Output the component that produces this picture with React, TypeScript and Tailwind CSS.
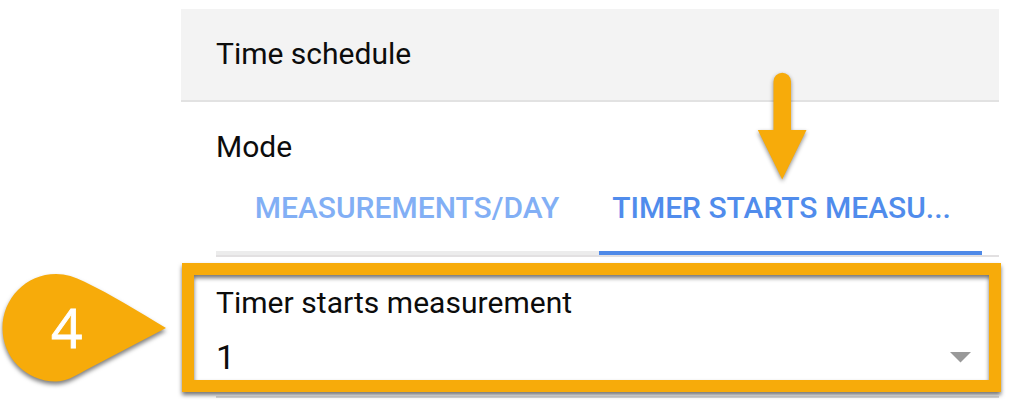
function Callout() {
  return (
    <div className="absolute left-0 top-[264px] h-[130px] w-[175px]">
      <svg
        className="absolute inset-0 drop-shadow-[0_3px_2px_rgba(0,0,0,0.5)]"
        width="175"
        height="130"
        viewBox="0 0 175 130"
        aria-hidden="true"
      >
        <path
          d="M166 64 L84 107 C75 112 66 117.500 56 117.500 C26 117.500 2.500 93.500 2.500 64 C2.500 34.500 26 10 56 10 C66 10 75 13 84 17.500 C112 31 138 47 166 64 Z"
          fill="#f7ab0a"
        />
      </svg>
      <span className="absolute left-[51px] top-[23px] font-['Open_Sans',sans-serif] text-[55px] font-medium leading-[80px] text-white [-webkit-text-stroke:0.8px_white]">
        4
      </span>
    </div>
  );
}

function Arrow() {
  return (
    <svg
      className="absolute left-[750px] top-[65px] drop-shadow-[0_2px_2px_rgba(0,0,0,0.45)]"
      width="64"
      height="124"
      viewBox="0 0 64 124"
      aria-hidden="true"
    >
      <path d="M23.500 16.500 a8.750 8.750 0 0 1 17.500 0 V65 H56.500 L32.200 114.500 L7.800 65 H23.500 Z" fill="#f7ab0a" />
    </svg>
  );
}

export default function App() {
  return (
    <div className="relative h-[407px] w-[1024px] overflow-hidden bg-white pl-[181px] pt-[9px] font-[Roboto,sans-serif] text-[30px] leading-10 text-[#0c0c0c]">
      <main className="flex w-[818px] flex-col">
        <header className="h-[93px] border-b-2 border-[#e2e2e2] bg-[#f3f3f3] pl-[35px] pt-[25px]">
          <h1>Time schedule</h1>
        </header>

        <section className="ml-[35px] h-[155px] pt-[25px]">
          <h2>Mode</h2>
          <div className="flex h-[90px] items-end border-b-2 border-[#e2e0e1] font-medium">
            <button className="flex h-[67px] w-[383px] justify-center whitespace-nowrap border-b-4 border-[#ececec] pr-[1px] text-[#82aff5]">
              MEASUREMENTS/DAY
            </button>
            <button className="flex h-[67px] w-[383px] justify-center whitespace-nowrap border-b-4 border-[#4f8ae8] pr-[18px] text-[#508cec]">
              TIMER STARTS MEASU...
            </button>
          </div>
        </section>

        <section className="ml-[35px] h-[141px] border-b-2 border-[#d9d9d9] pt-[26px]">
          <h2 className="tracking-[0.04px]">Timer starts measurement</h2>
          <div className="mt-[14px] flex items-center justify-between pr-[28px] text-[34px]">
            <span>1</span>
            <svg width="21" height="11" viewBox="0 0 21 11" aria-hidden="true">
              <path d="M0 0 H21 L10.500 10.500 Z" fill="#999999" />
            </svg>
          </div>
        </section>
      </main>

      <div className="absolute left-[182px] top-[263px] h-[129px] w-[819px] border-[12px] border-[#f7ab0a] drop-shadow-[0_3px_2px_rgba(0,0,0,0.55)]" />
      <Arrow />
      <Callout />
    </div>
  );
}
